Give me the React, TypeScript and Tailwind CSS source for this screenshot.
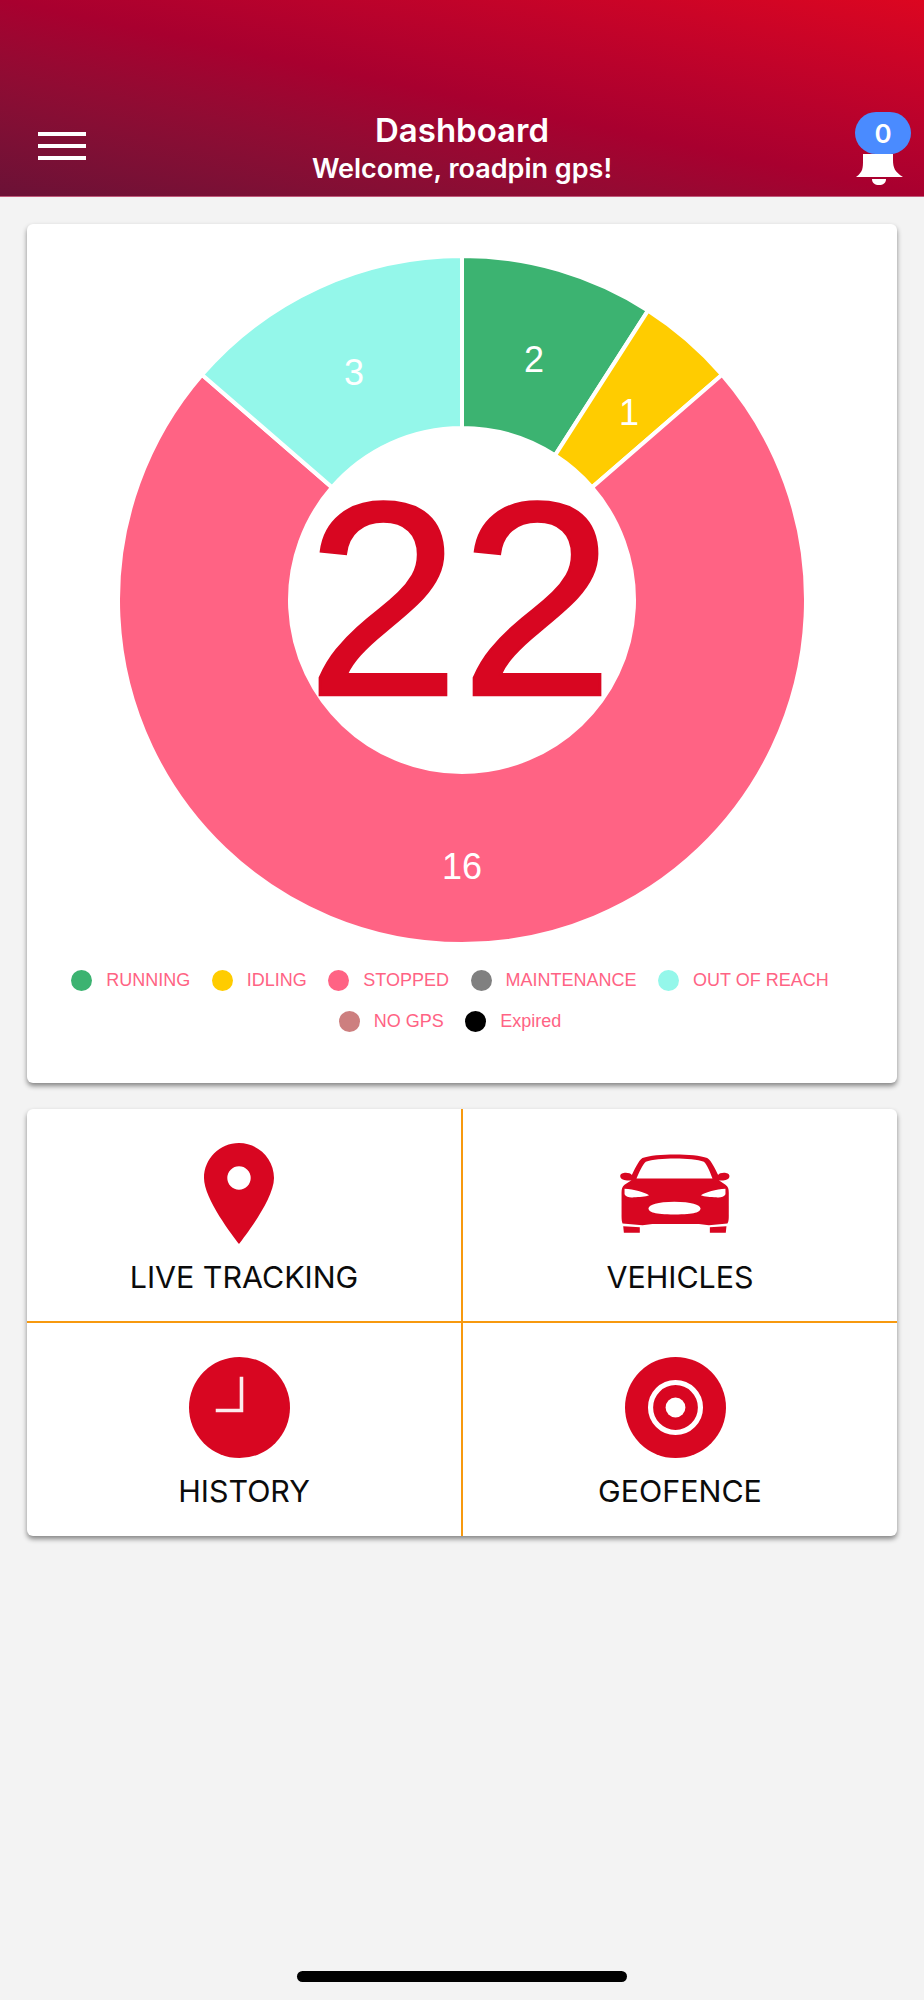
import React from 'react'

const CX = 350
const CY = 350
const R = 344
const R_IN = 172

const SEGMENTS = [
  { value: 2, color: '#3cb371', label: { x: 422, y: 108.5 } },
  { value: 1, color: '#ffcc00', label: { x: 517, y: 161.5 } },
  { value: 16, color: '#ff6384', label: { x: 350, y: 615.5 } },
  { value: 3, color: '#94f7ea', label: { x: 242, y: 121.5 } },
]

const LEGEND = [
  { name: 'RUNNING', dot: 'bg-[#3cb371]' },
  { name: 'IDLING', dot: 'bg-[#ffcc00]' },
  { name: 'STOPPED', dot: 'bg-[#ff6384]' },
  { name: 'MAINTENANCE', dot: 'bg-[#808080]' },
  { name: 'OUT OF REACH', dot: 'bg-[#94f7ea]' },
  { name: 'NO GPS', dot: 'bg-[#cd7f7f]' },
  { name: 'Expired', dot: 'bg-black' },
]

function arcPath(startDeg: number, endDeg: number) {
  const pt = (r: number, d: number) => {
    const a = ((d - 90) * Math.PI) / 180
    return `${CX + r * Math.cos(a)} ${CY + r * Math.sin(a)}`
  }
  const large = endDeg - startDeg > 180 ? 1 : 0
  return `M${pt(R, startDeg)} A${R} ${R} 0 ${large} 1 ${pt(R, endDeg)} L${pt(R_IN, endDeg)} A${R_IN} ${R_IN} 0 ${large} 0 ${pt(R_IN, startDeg)} Z`
}

function Doughnut() {
  const total = SEGMENTS.reduce((n, s) => n + s.value, 0)
  let angle = 0
  return (
    <svg viewBox="0 0 700 700" className="mx-auto block h-[700px] w-[700px] font-['Liberation_Sans',sans-serif]">
      {SEGMENTS.map(s => {
        const start = angle
        angle += (s.value / total) * 360
        return <path key={s.color} d={arcPath(start, angle)} fill={s.color} stroke="#fff" strokeWidth={4} />
      })}
      {SEGMENTS.map(s => (
        <text key={s.value} x={s.label.x} y={s.label.y + 13} textAnchor="middle" fontSize={36} fill="#fff">
          {s.value}
        </text>
      ))}
      <text x={348} y={445} textAnchor="middle" fontSize={277} fill="#d80621" stroke="#d80621" strokeWidth={2.5}>22</text>
    </svg>
  )
}

function PinIcon() {
  return (
    <svg viewBox="0 0 70 101" className="h-[101px] w-[70px]">
      <path
        fillRule="evenodd"
        fill="#d80621"
        d="M35 0C54.3 0 70 15.7 70 35C70 56 41 93 35 101C29 93 0 56 0 35C0 15.7 15.7 0 35 0ZM35 23.3A11.7 11.7 0 1 0 35 46.7A11.7 11.7 0 1 0 35 23.3Z"
      />
    </svg>
  )
}

function CarIcon() {
  return (
    <svg viewBox="60 40 336 244" className="h-[81px] w-[112px]">
      <path
        fillRule="evenodd"
        fill="#d80621"
        d="M130 55C170 41 286 41 325 55C338 62 352 95 358 106C362 98 392 96 392 110C392 122 372 124 360 122L380 136C388 142 390 148 390 160L390 230C390 245 388 250 386 252L330 258L300 254L160 254L130 258L70 252C68 248 67 240 67 230L67 160C67 148 69 142 76 136L97 122C85 124 63 122 63 110C63 96 93 98 98 106C104 95 118 62 130 55ZM112 117L341 117C334 98 325 75 315 66C280 53 176 53 140 66C130 75 120 98 112 117ZM76 148L76 164C80 173 95 175 104 173C120 172 140 172 150 167C135 158 105 150 76 148ZM380 148L380 164C376 173 361 175 352 173C336 172 316 172 306 167C321 158 351 150 380 148ZM148 207C150 196 175 187 226 187C278 187 303 196 305 207C303 218 290 225 226 225C165 225 150 218 148 207ZM72 261L122 264L122 280L74 280ZM383 261L333 264L333 280L381 280Z"
      />
    </svg>
  )
}

function ClockIcon() {
  return (
    <svg viewBox="0 0 102 102" className="h-[101px] w-[101px]">
      <circle cx={51} cy={51} r={51} fill="#d80621" />
      <path d="M53 20V54H27" fill="none" stroke="#fff" strokeWidth={3.6} opacity={0.92} />
    </svg>
  )
}

function TargetIcon() {
  return (
    <svg viewBox="0 0 102 102" className="h-[101px] w-[101px]">
      <circle cx={51} cy={51} r={51} fill="#d80621" />
      <circle cx={51} cy={51} r={25.2} fill="none" stroke="#fff" strokeWidth={5.2} />
      <circle cx={51} cy={51} r={10} fill="#fff" />
    </svg>
  )
}

function Tile({ label, icon, className }: { label: string; icon: React.ReactNode; className: string }) {
  return (
    <div className={`flex flex-col items-center pt-[34px] ${className}`}>
      <div className="mr-[10px] flex h-[101px] items-center justify-center">{icon}</div>
      <span className="mt-[15px] font-['Inter',sans-serif] text-[30.4px] leading-[36px] text-[#0b0b0b]">{label}</span>
    </div>
  )
}

export default function App() {
  return (
    <div className="relative flex min-h-[2000px] flex-col bg-[#f3f3f3] font-['Inter',sans-serif]">
      {/* Header */}
      <header className="flex h-[197px] items-start border-b border-b-[#c0597a] bg-gradient-to-tr from-[#6b1136] via-[#a8002f] to-[#dc0620]">
        <div className="flex-1">
          <div className="mt-[132px] ml-[38px] flex w-[48px] flex-col gap-[8px]">
            <div className="h-[4px] bg-white" />
            <div className="h-[4px] bg-white" />
            <div className="h-[4px] bg-white" />
          </div>
        </div>
        <div className="mt-[110px] flex flex-col items-center text-white">
          <span className="text-[33px] leading-[40px] font-semibold">Dashboard</span>
          <span className="text-[27px] leading-[38px] font-semibold">Welcome, roadpin gps!</span>
        </div>
        <div className="flex flex-1 justify-end">
          <div className="relative mt-[112px] mr-[13px] h-[74px] w-[56px]">
            <svg viewBox="0 0 56 74" className="absolute top-0 left-0 h-[74px] w-[56px]">
              <path d="M8 42H38V48C38 56 40 60 48 65H1C8 60 8 56 8 48Z" fill="#fff" />
              <path d="M17 67H31C31 71 28 73 24 73C20 73 17 71 17 67Z" fill="#fff" />
            </svg>
            <div className="absolute top-0 left-0 flex h-[42px] w-[56px] items-center justify-center rounded-[21px] bg-[#4a8bff] text-[26px] font-semibold text-white">
              0
            </div>
          </div>
        </div>
      </header>

      {/* Status chart */}
      <section className="mx-[27px] mt-[27px] h-[859px] rounded-[6px] bg-white pt-[26px] shadow-[0_3px_5px_rgba(0,0,0,0.45)]">
        <Doughnut />
        <div className="mt-[19px] flex flex-wrap justify-center gap-x-[21.5px] gap-y-[19px] pr-[24px]">
          {LEGEND.map(item => (
            <div key={item.name} className="flex h-[22px] items-center gap-[14px]">
              <span className={`h-[21px] w-[21px] rounded-full ${item.dot}`} />
              <span className="font-['Liberation_Sans',sans-serif] text-[18px] text-[#ff6384]">{item.name}</span>
            </div>
          ))}
        </div>
      </section>

      {/* Shortcuts */}
      <section className="mx-[27px] mt-[26px] grid h-[427px] grid-cols-[436px_434px] grid-rows-[214px_213px] rounded-[6px] bg-white shadow-[0_3px_5px_rgba(0,0,0,0.45)]">
        <Tile label="LIVE TRACKING" icon={<PinIcon />} className="border-r-2 border-b-2 border-[#f7990f]" />
        <Tile label="VEHICLES" icon={<CarIcon />} className="border-b-2 border-[#f7990f]" />
        <Tile label="HISTORY" icon={<ClockIcon />} className="border-r-2 border-[#f7990f]" />
        <Tile label="GEOFENCE" icon={<TargetIcon />} className="" />
      </section>

      {/* Home indicator */}
      <div className="absolute bottom-[18px] left-[297px] h-[11px] w-[330px] rounded-full bg-black" />
    </div>
  )
}
